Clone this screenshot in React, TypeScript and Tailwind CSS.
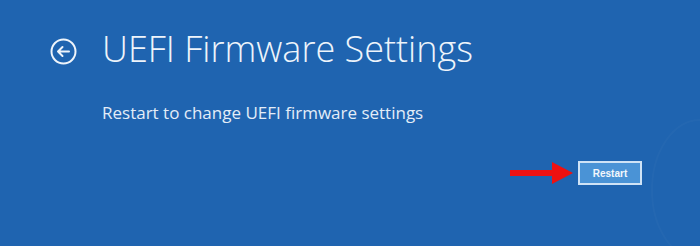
import React from "react";

export default function App() {
  return (
    <div className="relative w-[700px] h-[246px] overflow-hidden bg-[#1f64b0] text-[#eef4fb]" style={{ fontFamily: '"Open Sans", "Noto Sans", sans-serif' }}>
      <div className="flex items-center pl-[50px] pt-[27px]">
        <svg width="27" height="27" viewBox="0 0 27 27" className="shrink-0 mt-[4px]">
          <circle cx="13.5" cy="13.5" r="12" fill="none" stroke="#eef4fb" strokeWidth="2" />
          <path d="M8 13.5 H19 M8 13.5 L12.5 9 M8 13.5 L12.5 18" fill="none" stroke="#eef4fb" strokeWidth="2" strokeLinecap="round" strokeLinejoin="round" />
        </svg>
        <h1 className="ml-[25px] text-[36px] font-light leading-[44px]">UEFI Firmware Settings</h1>
      </div>
      <p className="ml-[102px] mt-[30px] text-[17px] leading-[24px] text-[#e3edf8]">Restart to change UEFI firmware settings</p>
      <div className="flex items-center justify-end pr-[58px] mt-[36px]">
        <svg width="64" height="22" viewBox="0 0 64 22" className="mr-[4px]">
          <polygon points="0,8 42,8 42,0 63,11 42,22 42,14 0,14" fill="#ee1111" />
        </svg>
        <button className="w-[64px] h-[24px] border-2 border-[#cfe3f6] bg-[#4a93d6] text-[10px] font-bold text-[#f2f7fc] flex items-center justify-center" style={{ fontFamily: '"Liberation Sans", Arial, sans-serif' }}>Restart</button>
      </div>
      <svg className="absolute left-[640px] top-[115px]" width="90" height="150" viewBox="0 0 90 150">
        <ellipse cx="60" cy="75" rx="48" ry="70" fill="none" stroke="rgba(255,255,255,0.025)" strokeWidth="2" />
      </svg>
    </div>
  );
}
